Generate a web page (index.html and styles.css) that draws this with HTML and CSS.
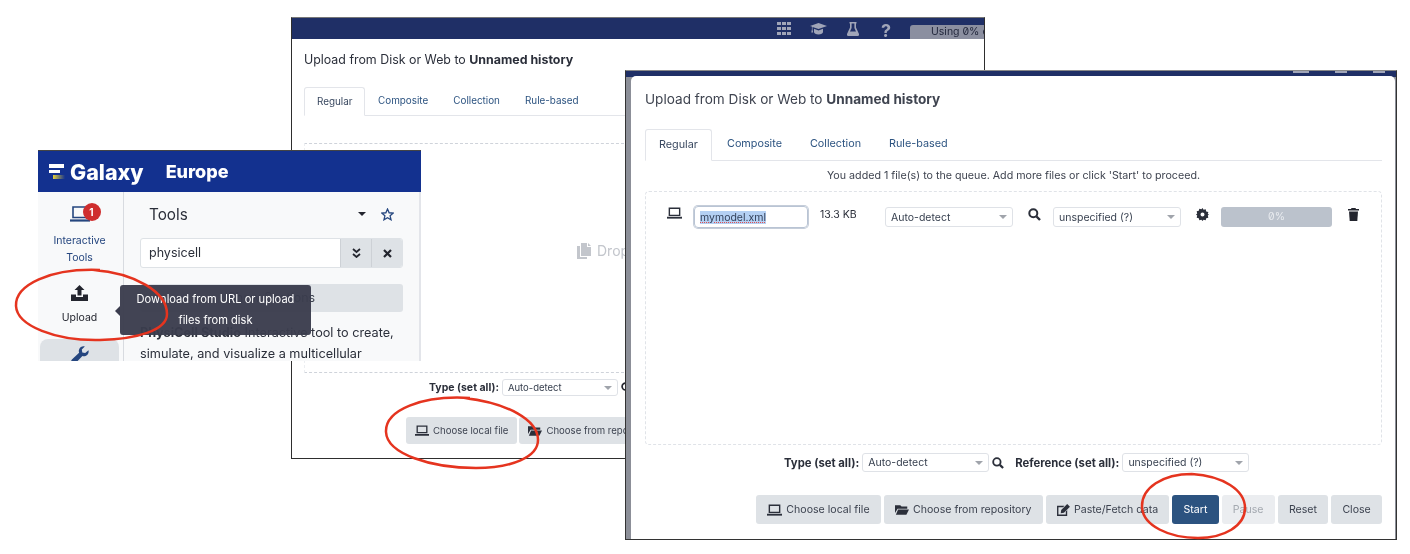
FILE: index.html
```html
<!DOCTYPE html>
<html lang="en">
<head>
    <meta charset="UTF-8">
    <title>Galaxy Europe - Upload</title>
    <link rel="stylesheet" href="styles.css">
</head>
<body>
    <!-- Back window: upload dialog, empty queue -->
    <div class="window window-back">
        <div class="masthead-back">
            <svg class="mast-icon" width="14" height="13" viewBox="0 0 14 13" fill="#a0a5b8"><path d="M0 0h4v3H0zM5 0h4v3H5zM10 0h4v3h-4zM0 5h4v3H0zM5 5h4v3H5zM10 5h4v3h-4zM0 10h4v3H0zM5 10h4v3H5zM10 10h4v3h-4z"/></svg>
            <svg class="mast-icon" width="17" height="13" viewBox="0 0 17 13" fill="#a0a5b8"><path d="M8.500 1 17 4l-8.500 3L2.500 4.900v2.300l.6 3.300H1.300l.6-3.300V4.500L0 4z"/><path d="M4 6.800l4.500 1.600L13 6.800V10c0 1.300-2 2.400-4.500 2.400S4 11.300 4 10z"/></svg>
            <svg class="mast-icon" width="12" height="14" viewBox="0 0 12 14" fill="#a0a5b8"><path d="M2.500 0h7v1.500H9v4l3 6.500c.4 1-.2 2-1.300 2H1.300C.2 14-.4 13 0 12l3-6.500v-4h-.5zM4.600 1.500v4.400L3 9.500h6L7.400 5.900V1.500z"/></svg>
            <span class="mast-help">?</span>
            <div class="quota">Using 0% of</div>
        </div>
        <div class="back-body">
            <div class="dialog-title back-title">Upload from Disk or Web to <b>Unnamed history</b></div>
            <ul class="tabs back-tabs">
                <li class="active">Regular</li>
                <li>Composite</li>
                <li>Collection</li>
                <li>Rule-based</li>
            </ul>
            <div class="drop-area">
                <div class="drop-hint">
                    <svg width="14" height="16" viewBox="0 0 14 16" fill="#c3c6cc"><path d="M4 0h6v4h4v9H4z"/><path d="M0 3h3v11h7v2H0z"/><path d="M11 0l3 3h-3z"/></svg>
                    <span>Drop files here</span>
                </div>
            </div>
            <div class="set-all back-set-all">
                <b>Type (set all):</b>
                <div class="select select-back">Auto-detect<i class="caret"></i></div>
                <svg width="11" height="11" viewBox="0 0 13 13"><circle cx="5.300" cy="5.300" r="4" fill="none" stroke="#25262f" stroke-width="2"/><path d="M8.500 8.500 12 12" stroke="#25262f" stroke-width="2.400"/></svg>
            </div>
            <div class="back-buttons">
                <button class="btn btn-back">
                    <svg width="14" height="11" viewBox="0 0 16 12" fill="none" stroke="#2b2f3a" stroke-width="1.500"><path d="M2.500 1h11v7.500h-11z"/><path d="M0 11h16" stroke-width="2"/></svg>
                    Choose local file
                </button>
                <button class="btn btn-back">
                    <svg width="14" height="11" viewBox="0 0 16 12" fill="#2b2f3a"><path d="M0 1h6l1.500 1.500H14V5H3L0 10z"/><path d="M3.500 6H16l-3 6H1z"/></svg>
                    Choose from repository
                </button>
            </div>
        </div>
    </div>

    <!-- Front window: upload dialog with one queued file -->
    <div class="window window-front">
        <div class="front-mast">
            <i></i>
            <i></i>
            <i></i>
        </div>
        <div class="dialog">
            <div class="dialog-title front-title">Upload from Disk or Web to <b>Unnamed history</b></div>
            <ul class="tabs front-tabs">
                <li class="active">Regular</li>
                <li>Composite</li>
                <li>Collection</li>
                <li>Rule-based</li>
            </ul>
            <p class="queue-note">You added 1 file(s) to the queue. Add more files or click 'Start' to proceed.</p>
            <div class="queue">
                <div class="queue-row">
                    <svg class="row-laptop" width="15" height="12" viewBox="0 0 16 12" fill="none" stroke="#2b2f3a" stroke-width="1.500"><path d="M2.500 1h11v7.500h-11z"/><path d="M0 11h16" stroke-width="2"/></svg>
                    <div class="name-input"><span class="name-selected">mymodel.xml</span></div>
                    <span class="file-size">13.3 KB</span>
                    <div class="select select-type">Auto-detect<i class="caret"></i></div>
                    <svg class="row-search" width="13" height="13" viewBox="0 0 13 13"><circle cx="5.300" cy="5.300" r="4" fill="none" stroke="#2b2f3a" stroke-width="2"/><path d="M8.500 8.500 12 12" stroke="#2b2f3a" stroke-width="2.400"/></svg>
                    <div class="select select-ref">unspecified (?)<i class="caret"></i></div>
                    <svg class="row-gear" width="13" height="13" viewBox="0 0 13 13" fill="#2b2f3a"><path fill-rule="evenodd" d="M6.500 0l1.100 1.800 2.100-.5.500 2.100 2.100.5-.5 2.100L13 6.500l-1.200 1.100.5 2.100-2.100.5-.5 2.100-2.100-.5L6.500 13l-1.100-1.200-2.100.5-.5-2.100-2.100-.5.5-2.100L0 6.500l1.200-1.100-.5-2.100 2.100-.5.5-2.100 2.100.5zM6.500 4.500a2 2 0 1 0 0 4 2 2 0 0 0 0-4z"/></svg>
                    <div class="progress">0%</div>
                    <svg class="row-trash" width="11" height="13" viewBox="0 0 11 13" fill="#23252e"><path d="M3.500 0h4l.5 1h3v1.500H0V1h3z"/><path d="M1 3.500h9L9.300 13H1.700z"/></svg>
                </div>
            </div>
            <div class="set-all front-set-all">
                <b>Type (set all):</b>
                <div class="select select-all-type">Auto-detect<i class="caret"></i></div>
                <svg width="12" height="12" viewBox="0 0 13 13"><circle cx="5.300" cy="5.300" r="4" fill="none" stroke="#2b2f3a" stroke-width="2"/><path d="M8.500 8.500 12 12" stroke="#2b2f3a" stroke-width="2.400"/></svg>
                <b class="ref-label">Reference (set all):</b>
                <div class="select select-all-ref">unspecified (?)<i class="caret"></i></div>
            </div>
            <div class="front-buttons">
                <button class="btn">
                    <svg width="15" height="12" viewBox="0 0 16 12" fill="none" stroke="#2b2f3a" stroke-width="1.500"><path d="M2.500 1h11v7.500h-11z"/><path d="M0 11h16" stroke-width="2"/></svg>
                    Choose local file
                </button>
                <button class="btn">
                    <svg width="14" height="11" viewBox="0 0 16 12" fill="#2b2f3a"><path d="M0 1h6l1.500 1.500H14V5H3L0 10z"/><path d="M3.500 6H16l-3 6H1z"/></svg>
                    Choose from repository
                </button>
                <button class="btn">
                    <svg width="13" height="12" viewBox="0 0 14 13" fill="#2b2f3a"><path d="M0 2h8L6.500 3.500h-5v8h8V8L11 6.500V13H0z"/><path d="M11 0l3 3-6.500 6.500-3.500.5.500-3.500z"/></svg>
                    Paste/Fetch data
                </button>
                <button class="btn btn-primary">Start</button>
                <button class="btn btn-disabled">Pause</button>
                <button class="btn">Reset</button>
                <button class="btn">Close</button>
            </div>
        </div>
    </div>

    <!-- Galaxy Europe window with tooltip -->
    <div class="window window-galaxy">
        <header class="masthead">
            <i class="logo"><i></i><i></i><i></i></i>
            <span class="brand">Galaxy</span>
            <span class="brand-sub">Europe</span>
        </header>
        <div class="galaxy-main">
            <nav class="activity-bar">
                <div class="activity activity-it">
                    <div class="activity-icon">
                        <svg width="20" height="16" viewBox="0 0 20 16" fill="none" stroke="#25467f" stroke-width="1.600"><path d="M3 1h14v10.500H3z"/><path d="M0 14.500h20" stroke-width="2.200"/></svg>
                        <span class="badge">1</span>
                    </div>
                    <span>Interactive<br>Tools</span>
                </div>
                <div class="activity activity-upload">
                    <svg width="17" height="16" viewBox="0 0 17 16" fill="#23252e"><path d="M8.500 0l5 5H10.500v5.500h-4V5H3.500z"/><path d="M0 9.500h5v2.500h7V9.500h5V16H0z"/></svg>
                    <span>Upload</span>
                </div>
                <div class="activity activity-tools">
                    <svg width="18" height="18" viewBox="0 0 18 18" fill="#25467f"><path d="M17.500 4.200c.6 2.300-.6 4.800-2.900 5.700-1.100.4-2.200.4-3.200.1L4.500 17.200c-1 1-2.600 1-3.600 0s-1-2.600 0-3.600L8.100 6.700c-.4-1-.4-2.200 0-3.200C9 1.100 11.500-.1 13.800.500l-3 3 .5 2.900 2.900.5z"/></svg>
                </div>
            </nav>
            <section class="tools-panel">
                <div class="tools-head">
                    <span class="tools-title">Tools</span>
                    <i class="tools-caret"></i>
                    <svg width="13" height="13" viewBox="0 0 24 24" fill="none" stroke="#25467f" stroke-width="2.400"><path d="M12 2l3 6.800 7.400.7-5.600 4.900 1.700 7.300-6.500-3.900-6.500 3.900 1.700-7.300L1.600 9.500 9 8.800z"/></svg>
                </div>
                <div class="search-box">
                    <span class="search-text">physicell</span>
                    <span class="search-btn">
                        <svg width="9" height="10" viewBox="0 0 9 10" fill="none" stroke="#23252e" stroke-width="1.800"><path d="M1 1l3.500 3L8 1M1 6l3.500 3L8 6"/></svg>
                    </span>
                    <span class="search-btn">
                        <svg width="9" height="9" viewBox="0 0 9 9" stroke="#23252e" stroke-width="2.200"><path d="M1 1l7 7M8 1L1 8"/></svg>
                    </span>
                </div>
                <div class="sections-btn">Show Sections</div>
                <p class="tool-desc"><b>PhysiCell Studio</b> Interactive tool to create, simulate, and visualize a multicellular</p>
            </section>
        </div>
        <div class="tooltip">Download from URL or upload<br>files from disk</div>
    </div>

    <!-- Red annotation circles -->
    <svg class="annotations" width="1410" height="554" viewBox="0 0 1410 554" fill="none" stroke="#e5341f" stroke-width="2.500">
        <path d="M100 270C50 268 15 285 16 306c1 20 40 35 84 34 38-1 67-10 67-26 0-22-32-41-74-44"/>
        <path d="M470 398c-48-3-85 12-84 34 1 22 45 36 90 36 36 0 62-11 62-28 0-20-30-37-74-42"/>
        <path d="M1192 474c-30 0-50 14-50 32 0 20 28 32 56 32 26 0 47-12 47-30 0-18-22-32-53-34"/>
    </svg>
</body>
</html>
```

FILE: styles.css
```css
* {
    box-sizing: border-box;
}
body {
    margin: 0;
    width: 1410px;
    height: 554px;
    overflow: hidden;
    background-color: #fff;
    color: #2b2f3a;
    font-family: Inter, "Liberation Sans", sans-serif;
}
ul, p {
    margin: 0;
    padding: 0;
}
/* Windows sit on a free canvas, like a collage */
.window {
    position: absolute;
    overflow: hidden;
    background-color: #fff;
    filter: blur(0.3px);
}
.window-back {
    left: 291px;
    top: 17px;
    width: 694px;
    height: 442px;
    border: 1px solid #2e2e2e;
    border-top-color: #777;
}
.window-front {
    left: 625px;
    top: 70px;
    width: 772px;
    height: 470px;
    border: 1px solid #333;
    border-top-color: #888;
    background: linear-gradient(#1f2f66 6px, #8c8f98 6px);
}
.window-galaxy {
    left: 38px;
    top: 150px;
    width: 383px;
    height: 211px;
    overflow: visible;
}
.annotations {
    position: absolute;
    left: 0;
    top: 0;
    pointer-events: none;
}

/* Back window */
.masthead-back {
    display: flex;
    align-items: center;
    justify-content: flex-end;
    height: 21px;
    background-color: #1f2f66;
}
.mast-icon {
    margin-right: 20px;
}
.mast-icon:nth-child(3) {
    margin-right: 22px;
}
.mast-icon:first-child {
    margin-right: 19px;
}
.mast-help {
    width: 10px;
    margin-right: 19px;
    color: #a0a5b8;
    font-size: 18px;
    font-weight: 700;
    line-height: 21px;
    padding-top: 3px;
}
.quota {
    width: 74px;
    height: 14px;
    margin-top: 7px;
    padding-left: 21px;
    border-radius: 3px 0 0 0;
    background-color: #8b8fa0;
    color: #23283d;
    font-size: 10.500px;
    font-feature-settings: "zero";
    line-height: 14px;
    white-space: nowrap;
    overflow: hidden;
}
.back-body {
    padding: 12px 0 0 12px;
}
.dialog-title {
    font-size: 12.400px;
    line-height: 18px;
    color: #2b2f3a;
}
.tabs {
    display: flex;
    list-style: none;
    border-bottom: 1px solid #e3e5ea;
    color: #2c5380;
}
.tabs li.active {
    color: #38475f;
    background-color: #fff;
    border: 1px solid #e3e5ea;
    border-bottom-color: #fff;
    border-radius: 3px 3px 0 0;
}
.back-tabs {
    margin-top: 18px;
    height: 29px;
    font-size: 9.900px;
    line-height: 27px;
    gap: 25px;
}
.back-tabs li.active {
    width: 61px;
    height: 29px;
    padding-left: 12px;
    margin-right: -12px;
}
.drop-area {
    position: relative;
    width: 320px;
    height: 230px;
    margin-top: 27px;
    border-top: 1px dashed #cfd3da;
    border-bottom: 1px dashed #cfd3da;
    border-left: 1px dashed #eceef1;
}
.drop-hint {
    position: absolute;
    left: 272px;
    top: 98px;
    display: flex;
    align-items: center;
    gap: 6px;
    color: #c3c6cc;
    font-size: 14px;
    white-space: nowrap;
}
.set-all {
    display: flex;
    align-items: center;
    font-size: 10.500px;
}
.set-all b {
    white-space: nowrap;
}
.back-set-all {
    margin: 6px 0 0 125px;
    gap: 3px;
}
.select {
    position: relative;
    display: flex;
    align-items: center;
    background-color: #fff;
    border: 1px solid #dfe2e7;
    border-radius: 3px;
    padding-left: 5px;
    color: #384150;
    white-space: nowrap;
}
.caret {
    position: absolute;
    right: 5px;
    top: 50%;
    margin-top: -2px;
    border: 4px solid transparent;
    border-top-color: #a0a4ab;
    border-bottom: 0;
}
.select-back {
    width: 116px;
    height: 17px;
    font-size: 9.500px;
}
.back-buttons {
    display: flex;
    gap: 2px;
    margin: 21px 0 0 102px;
}
.btn {
    display: flex;
    align-items: center;
    justify-content: center;
    gap: 4px;
    height: 29px;
    padding: 0 11.200px;
    border: 0;
    border-radius: 3px;
    background-color: #dee2e6;
    color: #3d4350;
    font-family: inherit;
    font-size: 10.600px;
    white-space: nowrap;
}
.btn-back {
    height: 27px;
    padding: 0 9px;
    font-size: 9.600px;
}

/* Front window */
.front-mast {
    display: flex;
    justify-content: flex-end;
    height: 0;
    padding-right: 11px;
}
.front-mast i {
    width: 12px;
    height: 2px;
    margin-left: 26px;
    background-color: #a0a5b8;
}
.front-mast i:first-child {
    width: 16px;
}
.dialog {
    height: 100%;
    margin: 5px 1px 0 5px;
    padding: 14px 13px 0 14px;
    background-color: #fff;
    border-radius: 5px 5px 0 0;
}
.front-title {
    font-size: 13.600px;
    color: #3f4450;
}
.front-tabs {
    margin-top: 21px;
    height: 32px;
    font-size: 10.800px;
    line-height: 30px;
    gap: 28px;
}
.front-tabs li.active {
    width: 67px;
    height: 32px;
    padding-left: 13px;
    margin-right: -13px;
}
.queue-note {
    margin-top: 6px;
    text-align: center;
    font-size: 10.700px;
    line-height: 17px;
    color: #3f4450;
}
.queue {
    height: 254px;
    margin-top: 7px;
    border: 1px dashed #e0e3e8;
    border-radius: 4px;
}
.queue-row {
    display: flex;
    align-items: flex-start;
    padding: 15px 0 0 21px;
    font-size: 10.500px;
}
.row-laptop {
    margin-right: 12px;
}
.name-input {
    width: 114px;
    height: 22px;
    margin-top: -1px;
    padding: 4px 0 0 5px;
    border: 1px solid #b9c4d4;
    border-radius: 4px;
    box-shadow: 0 0 0 1px #c5cdd9;
    line-height: 13px;
}
.name-selected {
    background-color: #b4d0f3;
    color: #33415a;
    text-decoration: underline dotted #e05050;
}
.file-size {
    width: 65px;
    margin-left: 12px;
    line-height: 16px;
}
.select-type {
    width: 128px;
    height: 20px;
}
.row-search {
    margin: 1px 0 0 15px;
}
.select-ref {
    width: 128px;
    height: 20px;
    margin-left: 12px;
}
.row-gear {
    margin: 1px 0 0 15px;
}
.progress {
    width: 111px;
    height: 20px;
    margin-left: 12px;
    border-radius: 3px;
    background-color: #bbc2cc;
    color: #e8ebef;
    font-feature-settings: "zero";
    text-align: center;
    line-height: 19px;
}
.row-trash {
    margin: 1px 0 0 16px;
}
.front-set-all {
    margin: 0;
    padding: 8px 0 0 139px;
    color: #2b2f3a;
}
.front-set-all b {
    font-size: 11.300px;
}
.select-all-type {
    width: 127px;
    height: 19px;
    margin: 0 3px;
}
.ref-label {
    margin-left: 11px;
}
.select-all-ref {
    width: 127px;
    height: 19px;
    margin-left: 3px;
}
.front-buttons {
    display: flex;
    justify-content: flex-end;
    gap: 3px;
    margin-top: 23px;
}
.btn-primary {
    background-color: #2c5380;
    color: #fff;
}
.btn-disabled {
    background-color: #ebedf0;
    color: #a4a9b0;
}

/* Galaxy window */
.masthead {
    display: flex;
    align-items: center;
    height: 42px;
    padding-left: 11px;
    border-top: 1px solid #444;
    background-color: #13318f;
    color: #fff;
}
.logo {
    display: flex;
    flex-direction: column;
    gap: 2px;
    width: 16px;
}
.logo i {
    display: block;
    height: 3.500px;
    width: 15px;
    background-color: #fff;
}
.logo i:nth-child(2) {
    width: 11px;
}
.logo i:nth-child(3) {
    width: 12px;
    margin-left: 4px;
    background: linear-gradient(90deg, #e4cf3a, #13318f);
}
.brand {
    margin-left: 5px;
    font-size: 21.500px;
    font-weight: 800;
}
.brand-sub {
    margin-left: 22px;
    font-size: 18px;
    font-weight: 800;
}
.galaxy-main {
    display: flex;
    height: 169px;
    overflow: hidden;
    background-color: #f8f9fa;
    border-right: 2px solid #e3e5ea;
}
.activity-bar {
    flex: none;
    width: 86px;
    padding: 14px 2px 0 0;
    border-right: 1px solid #d8dbe0;
    text-align: center;
    font-size: 10.500px;
    line-height: 17px;
}
.activity {
    display: flex;
    flex-direction: column;
    align-items: center;
}
.activity-it {
    color: #25467f;
    height: 68px;
}
.activity-icon {
    position: relative;
    height: 21px;
    margin-bottom: 5px;
}
.badge {
    position: absolute;
    left: 13px;
    top: -3px;
    width: 18px;
    height: 18px;
    border-radius: 50%;
    background-color: #cf2e2e;
    color: #fff;
    font-size: 10px;
    font-weight: 700;
    line-height: 18px;
}
.activity-upload {
    height: 67px;
    padding-top: 11px;
    gap: 8px;
    color: #23252e;
}
.activity-tools {
    height: 40px;
    margin: -2px 2px 0 2px;
    padding-top: 7px;
    border-radius: 8px;
    background-color: #dee2e6;
}
.tools-panel {
    flex: 1;
    padding: 0 16px;
    min-width: 0;
}
.tools-head {
    display: flex;
    align-items: center;
    height: 46px;
    padding: 0 9px 2px;
}
.tools-title {
    flex: 1;
    font-size: 15.300px;
    color: #2b2f3a;
}
.tools-caret {
    margin-right: 15px;
    border: 4px solid transparent;
    border-top-color: #23252e;
    border-bottom: 0;
}
.search-box {
    display: flex;
    height: 30px;
    border: 1px solid #dee2e6;
    border-radius: 3px;
    background-color: #fff;
    overflow: hidden;
}
.search-text {
    flex: 1;
    padding-left: 8px;
    font-size: 12.500px;
    line-height: 28px;
}
.search-btn {
    display: flex;
    align-items: center;
    justify-content: center;
    width: 31px;
    border-left: 1px solid #cdd1d6;
    background-color: #dee2e6;
}
.sections-btn {
    height: 28px;
    margin-top: 16px;
    border-radius: 3px;
    background-color: #dee2e6;
    color: #3d4350;
    font-size: 12.500px;
    line-height: 27px;
    text-align: center;
}
.tool-desc {
    margin-top: 10px;
    font-size: 12.700px;
    line-height: 21px;
    color: #2b2f3a;
}
.tooltip {
    position: absolute;
    left: 82px;
    top: 135px;
    width: 191px;
    height: 50px;
    padding-top: 4px;
    border-radius: 3px;
    background-color: rgba(58, 60, 77, 0.96);
    color: #fff;
    font-size: 11.100px;
    line-height: 21px;
    text-align: center;
}
.tooltip::before {
    content: "";
    position: absolute;
    left: -5px;
    top: 21px;
    border: 5px solid transparent;
    border-right-color: #3a3c4d;
    border-left: 0;
}
```
